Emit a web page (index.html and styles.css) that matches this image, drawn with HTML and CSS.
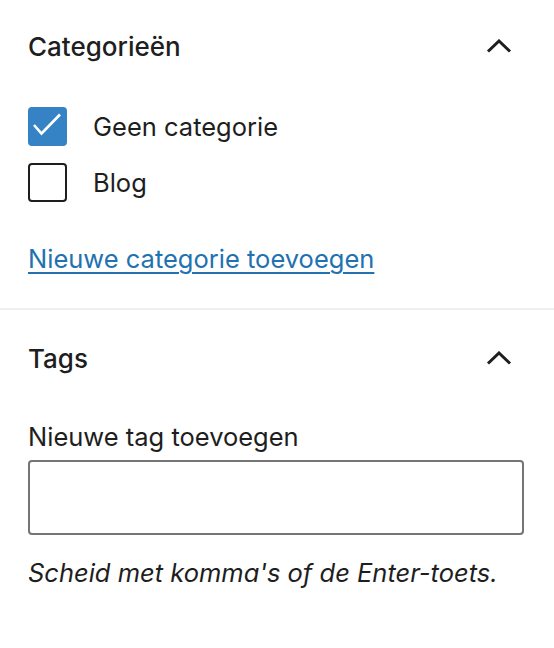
FILE: index.html
```html
<!DOCTYPE html>
<html lang="nl">
<head>
<meta charset="utf-8">
<link rel="stylesheet" href="styles.css">
</head>
<body>
<div class="sidebar">
  <section class="panel panel-cats">
    <div class="panel-head">
      <h2 class="panel-title">Categorieën</h2>
      <svg class="chev" width="26" height="14" viewBox="0 0 26 14"><path d="M2 12.5 L13 2 L24 12.5" fill="none" stroke="#1e1e1e" stroke-width="3"/></svg>
    </div>
    <ul class="cat-list">
      <li class="cat-item">
        <span class="box checked"><svg width="38" height="38" viewBox="0 0 38 38"><path d="M5 18 L12.5 26.5 L31 7.5" fill="none" stroke="#fff" stroke-width="2.6"/></svg></span>
        <span class="cat-label">Geen categorie</span>
      </li>
      <li class="cat-item">
        <span class="box"></span>
        <span class="cat-label">Blog</span>
      </li>
    </ul>
    <a class="add-link" href="#">Nieuwe categorie toevoegen</a>
  </section>
  <section class="panel panel-tags">
    <div class="panel-head tags-head">
      <h2 class="panel-title">Tags</h2>
      <svg class="chev" width="26" height="14" viewBox="0 0 26 14"><path d="M2 12.5 L13 2 L24 12.5" fill="none" stroke="#1e1e1e" stroke-width="3"/></svg>
    </div>
    <label class="tag-label">Nieuwe tag toevoegen</label>
    <div class="tag-input"></div>
    <p class="help">Scheid met komma's of de Enter-toets.</p>
  </section>
</div>
</body>
</html>
```
FILE: styles.css
```css
html, body {
  margin: 0;
  padding: 0;
  background: #fff;
}
body {
  font-family: Inter, "Noto Sans", sans-serif;
  color: #1e1e1e;
  width: 554px;
}
.panel {
  padding: 0 30px 0 28px;
}
.panel-cats {
  border-bottom: 2px solid #f0f0f0;
  padding-bottom: 34px;
}
.panel-head {
  display: flex;
  justify-content: space-between;
  align-items: center;
  height: 92px;
}
.tags-head {
  height: 96px;
}
.panel-title {
  margin: 0;
  font-size: 26px;
  font-weight: 500;
}
.chev {
  margin-right: 12px;
  display: block;
}
.cat-list {
  list-style: none;
  margin: 15px 0 0;
  padding: 0;
  display: flex;
  flex-direction: column;
  gap: 18px;
}
.cat-item {
  display: flex;
  align-items: center;
  height: 38px;
}
.box {
  width: 35px;
  height: 35px;
  border: 2px solid #1e1e1e;
  border-radius: 4px;
  display: flex;
  align-items: center;
  justify-content: center;
  margin-right: 26px;
}
.box.checked {
  background: #3582c4;
  border-color: #3582c4;
}
.box svg { display: block; flex: none; }
.cat-label {
  font-size: 25.5px;
}
.add-link {
  display: inline-block;
  margin-top: 42px;
  font-size: 25.5px;
  color: #2271b1;
  text-decoration: underline;
  text-underline-offset: 4px;
}
.tag-label {
  display: block;
  font-size: 25.5px;
  margin-top: 15px;
}
.tag-input {
  margin-top: 8px;
  height: 71px;
  border: 2px solid #757575;
  border-radius: 4px;
}
.help {
  margin: 22px 0 0;
  font-size: 25.5px;
  font-style: italic;
}
```
